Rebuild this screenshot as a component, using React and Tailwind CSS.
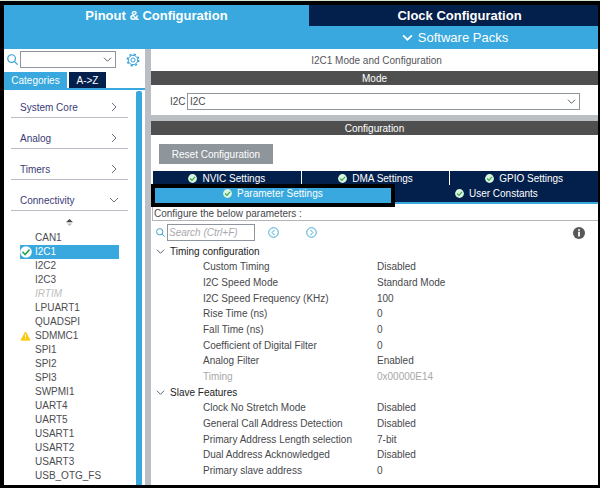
import React from "react";

const categories = [
  { name: "System Core", open: false },
  { name: "Analog", open: false },
  { name: "Timers", open: false },
  { name: "Connectivity", open: true },
];

const peripherals = [
  { name: "CAN1" },
  { name: "I2C1", state: "selected" },
  { name: "I2C2" },
  { name: "I2C3" },
  { name: "IRTIM", state: "disabled" },
  { name: "LPUART1" },
  { name: "QUADSPI" },
  { name: "SDMMC1", state: "warning" },
  { name: "SPI1" },
  { name: "SPI2" },
  { name: "SPI3" },
  { name: "SWPMI1" },
  { name: "UART4" },
  { name: "UART5" },
  { name: "USART1" },
  { name: "USART2" },
  { name: "USART3" },
  { name: "USB_OTG_FS" },
];

const groups = [
  {
    title: "Timing configuration",
    rows: [
      ["Custom Timing", "Disabled"],
      ["I2C Speed Mode", "Standard Mode"],
      ["I2C Speed Frequency (KHz)", "100"],
      ["Rise Time (ns)", "0"],
      ["Fall Time (ns)", "0"],
      ["Coefficient of Digital Filter", "0"],
      ["Analog Filter", "Enabled"],
      ["Timing", "0x00000E14", true],
    ],
  },
  {
    title: "Slave Features",
    rows: [
      ["Clock No Stretch Mode", "Disabled"],
      ["General Call Address Detection", "Disabled"],
      ["Primary Address Length selection", "7-bit"],
      ["Dual Address Acknowledged", "Disabled"],
      ["Primary slave address", "0"],
    ],
  },
];

function Chevron({ className, right, width = 1 }) {
  return (
    <svg viewBox="0 0 10 10" className={className} fill="none" stroke="currentColor" strokeWidth={width} aria-hidden="true">
      <path d={right ? "M3 1l4 4-4 4" : "M1 3l4 4 4-4"} />
    </svg>
  );
}

function SearchIcon({ className }) {
  return (
    <svg viewBox="0 0 12 12" className={className} fill="none" stroke="#35a0cf" strokeWidth="1.3" aria-hidden="true">
      <circle cx="5" cy="5" r="4.2" />
      <path d="M8 8l3.6 3.6" />
    </svg>
  );
}

function GearIcon() {
  return (
    <svg viewBox="0 0 14 14" className="size-[14px]" fill="none" stroke="#35a0d5" aria-hidden="true">
      <circle cx="7" cy="7" r="4.7" />
      <circle cx="7" cy="7" r="2.1" />
      <circle cx="7" cy="7" r="5.8" strokeWidth="1.4" strokeDasharray="2.2 2.355" />
    </svg>
  );
}

function CheckBadge() {
  return (
    <svg viewBox="0 0 10 10" className="size-[9px] shrink-0" fill="none" aria-hidden="true">
      <circle cx="5" cy="5" r="4.9" fill="#d9f5dd" />
      <path d="M2.4 5l2 2 3.4-3.7" stroke="#3aa655" strokeWidth="1.3" />
    </svg>
  );
}

function SelectedMark() {
  return (
    <svg viewBox="0 0 12 12" className="size-[12px]" fill="none" aria-hidden="true">
      <circle cx="6" cy="6" r="5.8" fill="#fff" />
      <path d="M2.5 5.8l2.6 2.8 4.4-5" stroke="#2fa05a" strokeWidth="1.6" />
    </svg>
  );
}

function WarningMark() {
  return (
    <svg viewBox="0 0 12 12" className="h-[10px] w-[11px]" aria-hidden="true">
      <path d="M6 1l5.5 10H.5z" fill="#fbc90c" stroke="#fbc90c" strokeLinejoin="round" />
      <path d="M6 4v3.5M6 8.6v1.3" stroke="#fff" strokeWidth="1.1" />
    </svg>
  );
}

function Tab({ children, className }) {
  return (
    <button role="tab" className={`flex items-center justify-center gap-[5px] text-white ${className}`}>
      <CheckBadge />
      {children}
    </button>
  );
}

function Sidebar() {
  return (
    <aside className="flex w-[141px] shrink-0 flex-col bg-white">
      <div className="flex h-[23px] items-center pb-[2px] pl-[3px]">
        <SearchIcon className="mr-[2px] size-[11px]" />
        <div className="relative w-[96px]">
          <select aria-label="Search peripheral" className="block h-[17px] w-full appearance-none border border-[#8f959c] bg-white">
            <option></option>
          </select>
          <Chevron className="pointer-events-none absolute top-[4px] right-[4px] size-[9px] text-gray-600" />
        </div>
        <button aria-label="Settings" className="ml-[10px]">
          <GearIcon />
        </button>
      </div>
      <div role="tablist" className="flex h-[18px] gap-[2px] border-b-2 border-[#38a8de]">
        <button role="tab" className="w-[63px] bg-[#38a8de] text-white">Categories</button>
        <button role="tab" className="w-[37px] bg-[#03204c] text-white">A-&gt;Z</button>
      </div>
      <div className="flex flex-1 justify-between pr-[3px]">
        <nav className="w-[124px] pl-[7px]">
          <div className="-mt-[3px]">
            {categories.map((c) => (
              <button key={c.name} className="flex h-[31px] w-[117px] items-end justify-between border-b border-[#b9bcc4] pr-[9px] pb-[3px] pl-[9px] leading-[12px] text-[#3b3b78]">
                {c.name}
                <Chevron right={!c.open} className="mb-[2px] size-[10px] text-gray-500" />
              </button>
            ))}
          </div>
          <div className="flex h-[20px] items-center justify-center pt-[3px]">
            <svg viewBox="0 0 8 8" className="size-[7px]" aria-hidden="true">
              <path d="M4 0l4 3.6H0z" fill="#444" />
              <path d="M4 8l3-3H1z" fill="#bbb" />
            </svg>
          </div>
          <ul className="pl-[9px]">
            {peripherals.map(({ name, state }) => (
              <li key={name}>
                <button
                  className={`flex h-[14px] w-[99px] items-center leading-[14px] ${
                    state === "selected"
                      ? "bg-[#38a8de] text-white"
                      : state === "disabled"
                        ? "text-[#bdbdbd] italic"
                        : "text-[#4c4c50]"
                  }`}
                >
                  <span className="w-[15px]">
                    {state === "selected" && <SelectedMark />}
                    {state === "warning" && <WarningMark />}
                  </span>
                  {name}
                </button>
              </li>
            ))}
          </ul>
        </nav>
        <div className="mt-[1px] w-[6px] rounded-t-[2px] bg-[#38a8de]" />
      </div>
    </aside>
  );
}

function BarTitle({ children }) {
  return <h2 className="h-[14px] bg-[#4f4f4f] text-center leading-[15px] text-white">{children}</h2>;
}

function Parameters() {
  return (
    <table className="h-[235px] w-full border-collapse leading-[14px] text-[#48484c]">
      {groups.map((g) => (
        <tbody key={g.title}>
          <tr>
            <th colSpan={2} className="p-0 pl-[5px] text-left font-normal text-[#222226]">
              <button className="flex items-center gap-[5px]">
                <Chevron className="size-[9px] text-gray-600" />
                {g.title}
              </button>
            </th>
          </tr>
          {g.rows.map(([name, value, muted]) => (
            <tr key={name} className={muted ? "text-[#a8a8a8]" : ""}>
              <td className="w-[226px] p-0 pl-[52px]">{name}</td>
              <td className="p-0">{value}</td>
            </tr>
          ))}
        </tbody>
      ))}
    </table>
  );
}

export default function App() {
  return (
    <div className="flex min-h-screen flex-col border-t border-[#d5e3d3] bg-black pt-[4px] pr-[2px] pb-[3px] pl-[4px] font-['Liberation_Sans',Arial,sans-serif] text-[10px]">
      <header className="bg-[#38a8de] text-white">
        <div role="tablist" className="flex h-[21px] text-[13px] font-bold">
          <button role="tab" className="w-[305px] leading-[21px]">Pinout &amp; Configuration</button>
          <button role="tab" className="flex-1 bg-[#03204c] pl-[12px] leading-[21px]">Clock Configuration</button>
        </div>
        <div className="flex h-[23px] pl-[308px]">
          <button className="flex flex-1 items-center justify-center gap-[5px] text-[13px]">
            <Chevron width={1.6} className="size-[11px]" />
            Software Packs
          </button>
        </div>
      </header>

      <div className="flex flex-1">
        <Sidebar />
        <div className="w-[6px] shrink-0 bg-[#b9bfc5]" />
        <main className="flex min-w-0 flex-1 flex-col bg-white">
          <h1 className="h-[22px] pl-[4px] text-center leading-[24px] text-[#55555a]">I2C1 Mode and Configuration</h1>
          <BarTitle>Mode</BarTitle>
          <div className="flex h-[30px] items-center pr-[18px] pl-[19px] pt-[2px] text-[#48484c]">
            <label htmlFor="i2c-mode" className="w-[17px] shrink-0">I2C</label>
            <div className="relative flex-1">
              <select id="i2c-mode" className="block h-[17px] w-full appearance-none border border-[#8f959c] bg-white pl-[2px]">
                <option>I2C</option>
              </select>
              <Chevron className="pointer-events-none absolute top-[4px] right-[4px] size-[9px] text-gray-600" />
            </div>
          </div>
          <div className="h-[6px] bg-[#b9bfc3]" />
          <BarTitle>Configuration</BarTitle>
          <div className="pt-[9px] pb-[7px] pl-[8px]">
            <button className="block h-[20px] w-[114px] bg-[#8e959b] text-white">Reset Configuration</button>
          </div>
          <div role="tablist">
            <div className="ml-[2px] grid h-[13px] grid-cols-3 gap-px">
              <Tab className="bg-[#03204c]">NVIC Settings</Tab>
              <Tab className="bg-[#03204c]">DMA Settings</Tab>
              <Tab className="bg-[#03204c]">GPIO Settings</Tab>
            </div>
            <div className="flex h-[23px]">
              <Tab className="w-6/11 border-4 border-black bg-[#38a8de] pb-[4px]">Parameter Settings</Tab>
              <Tab className="mt-[1px] h-[19px] flex-1 border-b-2 border-[#38a8de] bg-[#03204c]">User Constants</Tab>
            </div>
          </div>
          <p className="ml-[1px] h-[14px] border-b border-l border-[#b4b4b8] pl-[1px] leading-[13px] text-[#48484c]">
            Configure the below parameters :
          </p>
          <div className="flex h-[23px] items-center pr-[13px] pl-[5px]">
            <SearchIcon className="mr-[2px] size-[9px]" />
            <input
              aria-label="Search parameters"
              placeholder="Search (Ctrl+F)"
              className="h-[17px] w-[88px] border border-[#8f959c] pl-[1px] placeholder:text-[#a8a8ac] placeholder:italic"
            />
            <button aria-label="Previous match" className="ml-[13px]">
              <svg viewBox="0 0 11 11" className="size-[11px]" fill="none" stroke="#3fa9d6" aria-hidden="true">
                <circle cx="5.5" cy="5.5" r="4.8" />
                <path d="M6.5 3l-2.4 2.5L6.5 8" />
              </svg>
            </button>
            <button aria-label="Next match" className="ml-[27px]">
              <svg viewBox="0 0 11 11" className="size-[11px]" fill="none" stroke="#3fa9d6" aria-hidden="true">
                <circle cx="5.5" cy="5.5" r="4.8" />
                <path d="M4.5 3l2.4 2.5L4.5 8" />
              </svg>
            </button>
            <button aria-label="Information" className="ml-auto">
              <svg viewBox="0 0 12 12" className="size-[12px]" aria-hidden="true">
                <circle cx="6" cy="6" r="6" fill="#58585a" />
                <path d="M6 4.8v4.6" stroke="#fff" strokeWidth="1.8" fill="none" />
                <circle cx="6" cy="3" r="1" fill="#fff" />
              </svg>
            </button>
          </div>
          <Parameters />
        </main>
      </div>
    </div>
  );
}
